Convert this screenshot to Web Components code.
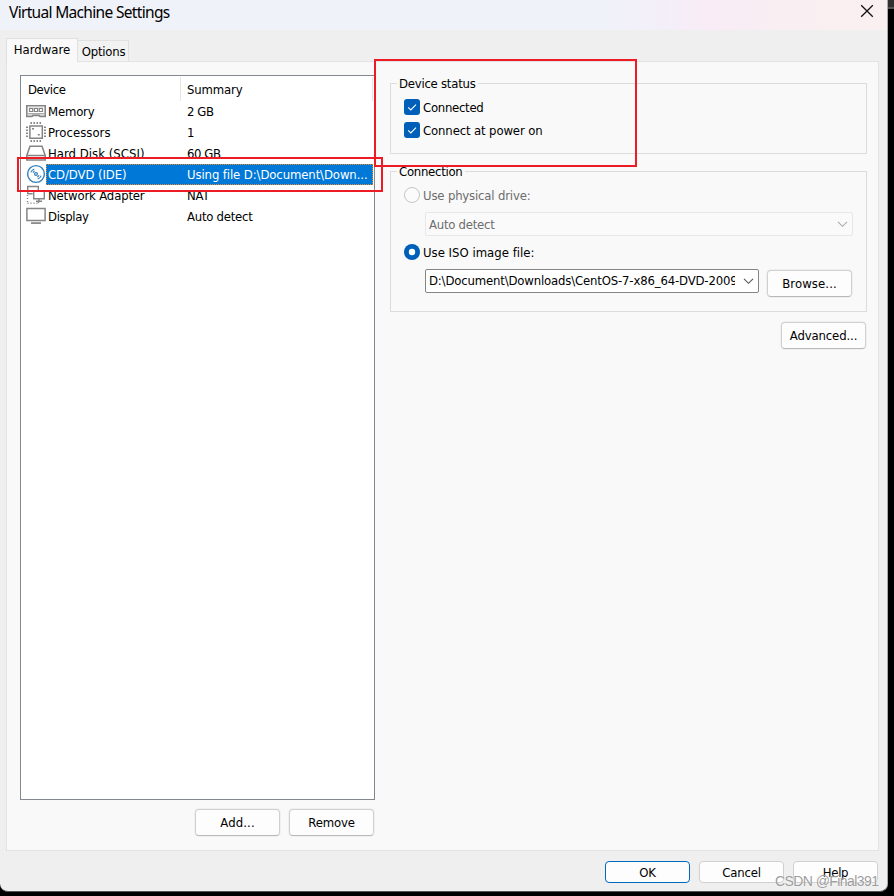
<!DOCTYPE html>
<html lang="en"><head><meta charset="utf-8"><title>Virtual Machine Settings</title>
<style>
html,body{margin:0;width:894px;height:896px;overflow:hidden;background:#000}
body{font:13px/21px "DejaVu Sans Condensed","DejaVu Sans",sans-serif;font-stretch:condensed;color:#000}
</style></head><body>
<vm-dialog></vm-dialog>
<script>
const define=(name,html,init)=>customElements.define(name,class extends HTMLElement{
  connectedCallback(){ if(this.shadowRoot)return; const r=this.attachShadow({mode:'open'}); r.innerHTML=typeof html==='function'?html(this):html; if(init)init(this,r); }
});
// Text run whose letter spacing is adjusted to occupy the width in "w".
define('fit-text','<style>:host{display:inline-block;white-space:pre;flex:none}</style><slot></slot>',(el)=>{
  const w=+el.getAttribute('w'); const n=el.textContent.length;
  if(w&&n>1){ const s=el.getBoundingClientRect().width; el.style.letterSpacing=((w-.5-s)/n).toFixed(3)+'px'; }
});
define('vm-button','<style>:host{display:flex;box-sizing:border-box;width:85px;height:27px;border:1px solid #d0d0d0;border-bottom-color:#b8b8b8;border-radius:4px;background:#fdfdfd;align-items:center;justify-content:center;box-shadow:0 0 0 1px #f0f0f0;flex:none}:host([flat]){height:22px;border-color:#d0d0d0;box-shadow:none}:host([primary]){border-color:#0067c0}</style><slot></slot>');
define('vm-check','<style>:host{display:flex;height:16px;align-items:center;gap:3px}svg{flex:none}</style><svg width="16" height="16"><rect width="16" height="16" rx="3" fill="#005fb8"/><path d="M4.2 8.4 6.8 11 12 5.7" fill="none" stroke="#fff" stroke-width="1.1"/></svg><slot></slot>');
define('vm-radio',el=>'<style>:host{display:flex;height:16px;align-items:center;gap:3px}:host([disabled]){color:#6d6d6d}svg{flex:none}</style><svg width="16" height="16">'+(el.hasAttribute('checked')?'<circle cx="8" cy="8" r="8" fill="#005fb8"/><circle cx="8" cy="8" r="3.2" fill="#fff"/>':'<circle cx="8" cy="8" r="7.5" fill="#fbfbfb" stroke="#c5c5c5"/>')+'</svg><slot></slot>');
define('vm-combo','<style>:host{display:flex;box-sizing:border-box;height:24px;border:1px solid #858585;border-radius:2px;background:#fff;align-items:center;padding:0 4px 0 3px;color:#000}:host([disabled]){border-color:#e7e7e7;background:#fafafa;color:#6d6d6d}.t{flex:1;overflow:hidden;height:21px;margin-right:8px}:host(:not([disabled])) .t{line-height:19px}svg{flex:none;color:#555}:host([disabled]) svg{color:#a8a8a8}</style><div class="t"><slot></slot></div><svg width="11" height="8"><path d="M1 1.8 5.5 6.3 10 1.8" fill="none" stroke="currentColor" stroke-width="1.1"/></svg>');
define('vm-group','<style>:host{display:block;box-sizing:border-box;border:1px solid #dcdcdc}.l{display:flex;width:max-content;height:16px;align-items:center;margin:-9px 0 0 6px;padding:0 2px;background:#f9f9f9}</style><div class="l"><slot name="label"></slot></div><slot></slot>');
const g='fill="none" stroke="#858585"';
const icons={
memory:`<g ${g}><path stroke-width="1.6" d="M.8 4.7h18.4v10.7H14l-1-1H7l-1 1H.8z"/><path stroke-width="1.2" d="M3.5 7.3h3.2v3.2H3.5zM8.4 7.3h3.2v3.2H8.4zM13.3 7.3h3.2v3.2h-3.2z"/><path d="M2 12.8h16"/></g>`,
cpu:`<g ${g}><path stroke-width="1.5" d="M3.9 3.9h12.4v12.4H3.9z"/><path stroke-width="2" stroke-dasharray="1.5 1.5" d="M4.5 1h12M4.5 19h12M1 4.5v12M19 4.5v12"/><path stroke-width="1.6" d="M6 6.8h2M11.8 12.8h2"/></g>`,
disk:`<g ${g} stroke-width="1.5"><path d="M4 3.2h12l3.2 9.3v4.5H.8v-4.5zM.8 12.5h18.4"/></g>`,
cd:`<g fill="none" stroke="#3180ba"><circle cx="10" cy="10" r="8.4" fill="#fff" stroke-width="1.4"/><circle cx="10" cy="10" r="1.4" stroke-width="1.2"/><path stroke-width="1.1" d="M4.9 8.3A5.3 5.3 0 0 1 8.3 4.9M7 8.7A3.2 3.2 0 0 1 8.7 7M15.1 11.7A5.3 5.3 0 0 1 11.7 15.1M13 11.3A3.2 3.2 0 0 1 11.3 13"/></g>`,
net:`<g ${g} stroke-width="1.4"><path d="M1.7 9V1.5h10.6V5M1.7 8.7h5M7.7 5.7h10.6v8H7.7zM13 13.5v2.5M10 16.2h6"/><path stroke-dasharray="1 2" d="M1.5 10v8M1.5 18.3h11M12.5 18v-2"/></g>`,
display:`<g ${g}><path stroke-width="1.5" d="M.9 2.6h18.2v12H.9z"/><path stroke-width="1.7" d="M5 17.1h10"/></g>`};
define('vm-row',el=>`<style>:host{display:flex;height:21px;align-items:flex-start;padding-left:5px}svg{flex:none;width:20px;height:20px}.b{display:grid;grid-template-columns:139px 1fr;justify-items:start;box-sizing:border-box;width:327px;height:21px;align-items:center;padding-left:2px}:host([selected]) .b{background:#0078d7;color:#fff;outline:1px dotted #e98a2b;outline-offset:-1px}</style><svg>${icons[el.getAttribute('icon')]}</svg><div class="b"><slot></slot><slot name="summary"></slot></div>`);
const row=(i,a,wa,b,wb,s='')=>`<vm-row icon="${i}" ${s}><fit-text w="${wa}">${a}</fit-text><fit-text slot="summary" w="${wb}">${b}</fit-text></vm-row>`;
define('device-list',`<style>:host{display:block;box-sizing:border-box;width:355px;height:725px;border:1px solid #828790;background:#fff}.h{display:grid;grid-template-columns:153px 192px;height:25px;padding-left:7px}.h>div{border-right:1px solid #e5e5e5;height:24px;margin-top:1px;line-height:26px}.h>div+div{padding-left:6px}</style>
<div class="h"><div><fit-text w="38">Device</fit-text></div><div><fit-text w="56">Summary</fit-text></div></div>`
+row('memory','Memory',47,'2 GB',27)+row('cpu','Processors',63,'1',7)+row('disk','Hard Disk (SCSI)',97,'60 GB',34)+row('cd','CD/DVD (IDE)',79,'Using file D:\\Document\\Down...',181,'selected')+row('net','Network Adapter',97,'NAT',23)+row('display','Display',41,'Auto detect',66));
define('red-frame','<style>:host{display:block;position:absolute;box-sizing:border-box;border:2px solid #ed1c24;z-index:3}</style>');
define('vm-dialog',`<style>
:host{display:block;position:relative;width:894px;height:896px;background:#000;overflow:hidden}
.edge{position:absolute;right:0;top:0;width:6px;height:7px;background:#303030;border-bottom:2px solid #555}
.win{display:flex;flex-direction:column;box-sizing:border-box;width:888px;height:892px;background:#efefef;border-right:1px solid #aaa;border-bottom:1px solid #555;border-radius:0 0 8px 8px;overflow:hidden;position:relative}
header{display:flex;justify-content:space-between;height:30px;flex:none;padding:0 13px 0 9px;box-sizing:border-box;background:linear-gradient(90deg,#f0f2f9 0 68%,#f3eff8 75%,#f9ecf7 80%,#f9eef2 88%,#faf0f0);font:15.5px/24px "Noto Sans",sans-serif;font-stretch:normal}
header svg{margin-top:4px}
.tabs{display:flex;height:31px;flex:none;padding-left:6px;align-items:flex-end}
.tab{box-sizing:border-box;border:1px solid #e1e1e1;border-bottom:0;display:flex;justify-content:center}
.a{width:72px;height:24px;background:#f9f9f9;margin-bottom:-1px;position:relative;z-index:1}
.o{width:51px;height:21px;background:#f2f2f2;border-left:0;padding-left:1px}
.panel{display:flex;box-sizing:border-box;width:873px;height:790px;margin-left:6px;border:1px solid #e3e3e3;background:#f9f9f9;padding:13px 0 0 13px;gap:15px;flex:none}
.left{width:355px}.btns{display:flex;justify-content:flex-end;gap:9px;padding:9px 1px 0 0}
.right{width:477px;padding-top:8px}
.g1{height:71px}.g2{height:141px;margin-top:17px}
.g1 vm-check,.g2 vm-radio{margin-left:13px}
.iso{display:flex;gap:8px;margin:9px 14px 0 34px;align-items:flex-start}
.iso vm-combo{width:334px}.iso vm-button{margin-top:1px}
footer{display:flex;justify-content:flex-end;gap:9px;padding:10px 9px 0 0}
.mark{position:absolute;left:775px;top:870px;font:14px/22px "Liberation Sans",sans-serif;color:#777b;z-index:4;text-shadow:0 0 1px #fff}
</style>
<div class="edge"></div>
<div class="win"><header><fit-text w="161">Virtual Machine Settings</fit-text><svg width="14" height="14"><path d="M1.2 1.2 12.8 12.8M12.8 1.2 1.2 12.8" stroke="#111" stroke-width="1.3"/></svg></header>
<div class="tabs"><div class="tab a"><fit-text w="57">Hardware</fit-text></div><div class="tab o"><fit-text w="44">Options</fit-text></div></div>
<div class="panel"><div class="left"><device-list></device-list><div class="btns"><vm-button><fit-text w="35">Add...</fit-text></vm-button><vm-button><fit-text w="47">Remove</fit-text></vm-button></div></div>
<div class="right"><vm-group class="g1"><fit-text slot="label" w="77">Device status</fit-text><vm-check style="margin-top:8px"><fit-text w="61">Connected</fit-text></vm-check><vm-check style="margin-top:7px"><fit-text w="120">Connect at power on</fit-text></vm-check></vm-group>
<vm-group class="g2"><fit-text slot="label" w="64">Connection</fit-text><vm-radio disabled style="margin-top:8px"><fit-text w="108">Use physical drive:</fit-text></vm-radio><vm-combo disabled style="margin:9px 13px 0 34px"><fit-text w="66">Auto detect</fit-text></vm-combo><vm-radio checked style="margin-top:8px"><fit-text w="112">Use ISO image file:</fit-text></vm-radio>
<div class="iso"><vm-combo><fit-text w="309">D:\\Document\\Downloads\\CentOS-7-x86_64-DVD-2009</fit-text></vm-combo><vm-button><fit-text w="55">Browse...</fit-text></vm-button></div></vm-group>
<vm-button style="margin:10px 1px 0 auto"><fit-text w="68">Advanced...</fit-text></vm-button></div></div>
<footer><vm-button flat primary><fit-text w="17">OK</fit-text></vm-button><vm-button flat><fit-text w="39">Cancel</fit-text></vm-button><vm-button flat><fit-text w="26">Help</fit-text></vm-button></footer></div>
<red-frame style="left:374px;top:59px;width:263px;height:108px"></red-frame>
<red-frame style="left:17px;top:157px;width:366px;height:35px"></red-frame>
<fit-text class="mark" w="104">CSDN @Final391</fit-text>`);
</script></body></html>
